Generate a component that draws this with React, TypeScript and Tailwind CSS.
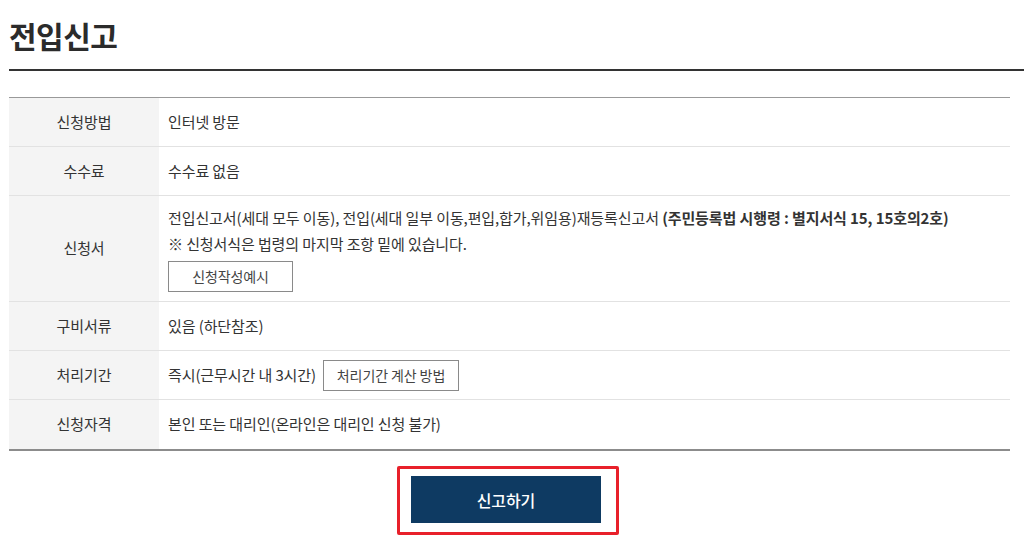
const rows = [
  { label: "신청방법", h: "h-[49px]" },
  { label: "수수료", h: "h-[49px]" },
];

function Label({ children }: { children: React.ReactNode }) {
  return (
    <div className="w-[150px] shrink-0 bg-[#f4f4f4] flex items-center justify-center text-[15px] text-[#333]">
      {children}
    </div>
  );
}

function Row({
  label,
  children,
  className = "h-[49px]",
  last = false,
}: {
  label: string;
  children: React.ReactNode;
  className?: string;
  last?: boolean;
}) {
  return (
    <div
      className={`flex ${className} ${last ? "" : "border-b border-[#e2e2e2]"}`}
    >
      <Label>{label}</Label>
      <div className="flex-1 pl-[9px] flex flex-col justify-center text-[15px] text-[#333]">
        {children}
      </div>
    </div>
  );
}

function SmallButton({ children }: { children: React.ReactNode }) {
  return (
    <span className="inline-flex items-center justify-center h-[31px] border border-[#8a8a8a] bg-white text-[14px] text-[#444]">
      {children}
    </span>
  );
}

export default function App() {
  return (
    <div
      className="w-[1024px] h-[553px] bg-white overflow-hidden tracking-[-0.1px]"
      style={{ fontFamily: '"Noto Sans CJK KR", "Noto Sans", sans-serif' }}
    >
      {/* title */}
      <div className="pl-[9px] pt-[13px]">
        <h1 className="text-[30px] font-bold leading-[44px] text-[#2b2b2b] tracking-[-0.5px]">
          전입신고
        </h1>
        <div className="mt-[12px] h-[2px] bg-[#333]" />
      </div>

      {/* table */}
      <div className="ml-[9px] mt-[26px] w-[1001px] border-t border-[#999] border-b-2 border-b-[#8c8c8c]">
        <Row label={rows[0].label}>인터넷 방문</Row>
        <Row label={rows[1].label}>수수료 없음</Row>
        <Row label="신청서" className="h-[106px]">
          <p className="leading-[26px]">
            전입신고서(세대 모두 이동), 전입(세대 일부 이동,편입,합가,위임용)재등록신고서{" "}
            <b className="font-bold">(주민등록법 시행령 : 별지서식 15, 15호의2호)</b>
          </p>
          <p className="leading-[26px]">※ 신청서식은 법령의 마지막 조항 밑에 있습니다.</p>
          <div className="mt-[4px]">
            <SmallButton>
              <span className="w-[123px] text-center">신청작성예시</span>
            </SmallButton>
          </div>
        </Row>
        <Row label="구비서류">있음 (하단참조)</Row>
        <Row label="처리기간">
          <div className="flex items-center gap-[7px]">
            <span>즉시(근무시간 내 3시간)</span>
            <SmallButton>
              <span className="w-[134px] text-center">처리기간 계산 방법</span>
            </SmallButton>
          </div>
        </Row>
        <Row label="신청자격" last>
          본인 또는 대리인(온라인은 대리인 신청 불가)
        </Row>
      </div>

      {/* submit */}
      <div className="flex justify-center mt-[15px] pr-[8px]">
        <div className="border-[3px] border-[#e8202a] rounded-[2px] pl-[11px] pr-[15px] pt-[7px] pb-[9px]">
          <button className="w-[190px] h-[47px] bg-[#0e3a62] text-white text-[16px] font-medium">
            신고하기
          </button>
        </div>
      </div>
    </div>
  );
}
